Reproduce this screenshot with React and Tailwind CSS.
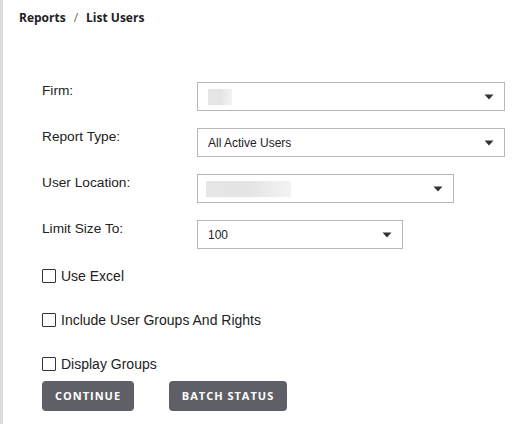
import React, { useState } from "react";

const Arrow = () => (
  <svg width="10" height="6" viewBox="0 0 10 6" className="shrink-0">
    <path d="M0.5 0.5 H9.5 L5 5.5 Z" fill="#333" />
  </svg>
);

const Select = ({ width, children }) => (
  <div
    className={`${width} h-[29px] border border-[#b7b7b7] bg-white flex items-center justify-between pl-[10px] pr-[10px]`}
  >
    <div className="flex items-center text-[12px] text-[#222]">{children}</div>
    <Arrow />
  </div>
);

const Blur = ({ width }) => (
  <span
    className={`${width} h-[16px] block bg-gradient-to-r from-[#e6e6e6] via-[#e4e4e4] to-[#f3f3f3]`}
  />
);

const Check = ({ label }) => {
  const [on, setOn] = useState(false);
  return (
    <label className="h-[16px] flex items-center gap-[5px] text-[14px] leading-[16px] text-[#222] cursor-pointer">
      <span
        onClick={() => setOn(!on)}
        className="w-[14px] h-[14px] border border-[#333] bg-white rounded-[1px] flex items-center justify-center text-[10px] leading-none"
      >
        {on ? "✓" : ""}
      </span>
      {label}
    </label>
  );
};

const Row = ({ label, children }) => (
  <div className="flex items-start">
    <div className="w-[155px] pt-[1px] text-[13.7px] leading-[16px] text-[#222]">{label}</div>
    {children}
  </div>
);

const App = () => {
  return (
    <div
      className="min-h-[424px] bg-white border-l-[3px] border-[#dcdcdc]"
      style={{ fontFamily: "Arial, 'Liberation Sans', sans-serif" }}
    >
      <div
        className="pl-[16px] pt-[9px] text-[12px] font-bold text-[#222] flex gap-[8px]"
        style={{ fontFamily: "'Open Sans', sans-serif" }}
      >
        <span>Reports</span>
        <span className="font-normal text-[#666]">/</span>
        <span>List Users</span>
      </div>

      <div className="pl-[39px] pt-[55px] flex flex-col gap-[17px]">
        <Row label="Firm:">
          <Select width="w-[308px]">
            <Blur width="w-[24px]" />
          </Select>
        </Row>
        <Row label="Report Type:">
          <Select width="w-[308px]">All Active Users</Select>
        </Row>
        <Row label="User Location:">
          <Select width="w-[257px]">
            <span className="-ml-[2px]">
              <Blur width="w-[85px]" />
            </span>
          </Select>
        </Row>
        <Row label="Limit Size To:">
          <Select width="w-[206px]">100</Select>
        </Row>
      </div>

      <div className="pl-[39px] pt-[19px] flex flex-col gap-[28px]">
        <Check label="Use Excel" />
        <Check label="Include User Groups And Rights" />
        <Check label="Display Groups" />
      </div>

      <div
        className="pl-[39px] pt-[9px] flex gap-[35px]"
        style={{ fontFamily: "'Open Sans', sans-serif" }}
      >
        <button className="w-[92px] h-[30px] rounded-[4px] bg-[#5e5f67] text-white text-[11px] font-bold tracking-[1px]">
          CONTINUE
        </button>
        <button className="w-[118px] h-[30px] rounded-[4px] bg-[#5e5f67] text-white text-[11px] font-bold tracking-[1px]">
          BATCH STATUS
        </button>
      </div>
    </div>
  );
};

export default App;
